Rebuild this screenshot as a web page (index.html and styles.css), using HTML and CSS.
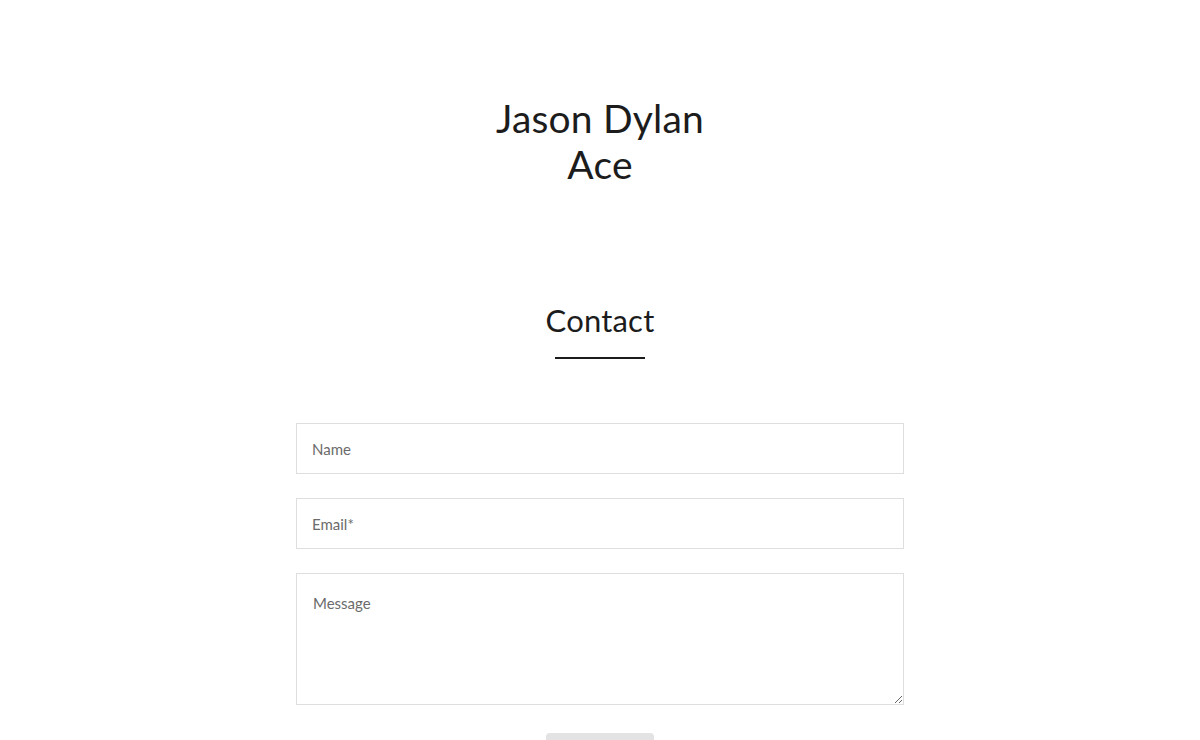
FILE: index.html
```html
<!DOCTYPE html>
<html>
<head>
    <title>Jason Dylan Ace</title>
    <link rel="stylesheet" href="styles.css">
</head>
<body>
    <header class="site-header">
        <h1 class="site-title">Jason Dylan<br>Ace</h1>
    </header>

    <section class="contact">
        <h2 class="contact-title">Contact</h2>
        <div class="contact-line"></div>

        <form class="contact-form">
            <input type="text" class="field" placeholder="Name">
            <input type="email" class="field" placeholder="Email*">
            <textarea class="field message" placeholder="Message"></textarea>
            <button type="submit" class="send">Send</button>
        </form>
    </section>
</body>
</html>
```

FILE: styles.css
```css
/* halaman */
body {
    margin: 0;
    padding: 0;
    background: #fff;
    color: #1c1c1c;
    font-family: Lato, "Noto Sans", sans-serif;
}

/* judul nama */
.site-header {
    padding-top: 95px;
    text-align: center;
}

.site-title {
    margin: 0;
    font-size: 39px;
    font-weight: 400;
    line-height: 46px;
    letter-spacing: 0.2px;
}

/* bagian kontak */
.contact {
    display: flex;
    flex-direction: column;
    align-items: center;
    padding-top: 113px;
}

.contact-title {
    margin: 0;
    font-size: 31px;
    font-weight: 400;
    line-height: 40px;
    letter-spacing: 0.2px;
}

.contact-line {
    width: 90px;
    height: 2px;
    background: #1c1c1c;
    margin-top: 17px;
}

.contact-form {
    width: 608px;
    margin-top: 64px;
    display: flex;
    flex-direction: column;
    align-items: center;
    gap: 24px;
}

.field {
    box-sizing: border-box;
    width: 100%;
    height: 51px;
    padding: 0 15px;
    border: 1px solid #dedede;
    border-radius: 0;
    font-family: Lato, "Noto Sans", sans-serif;
    font-size: 15px;
    color: #333;
    outline: none;
}

.field::placeholder {
    color: #6b6b6b;
}

.message {
    height: 132px;
    padding: 20px 16px;
    resize: vertical;
}

.send {
    width: 108px;
    height: 40px;
    border: none;
    border-radius: 4px;
    background: #e3e3e3;
    color: #555;
    font-family: Lato, "Noto Sans", sans-serif;
    font-size: 14px;
    margin-top: 4px;
}
```
